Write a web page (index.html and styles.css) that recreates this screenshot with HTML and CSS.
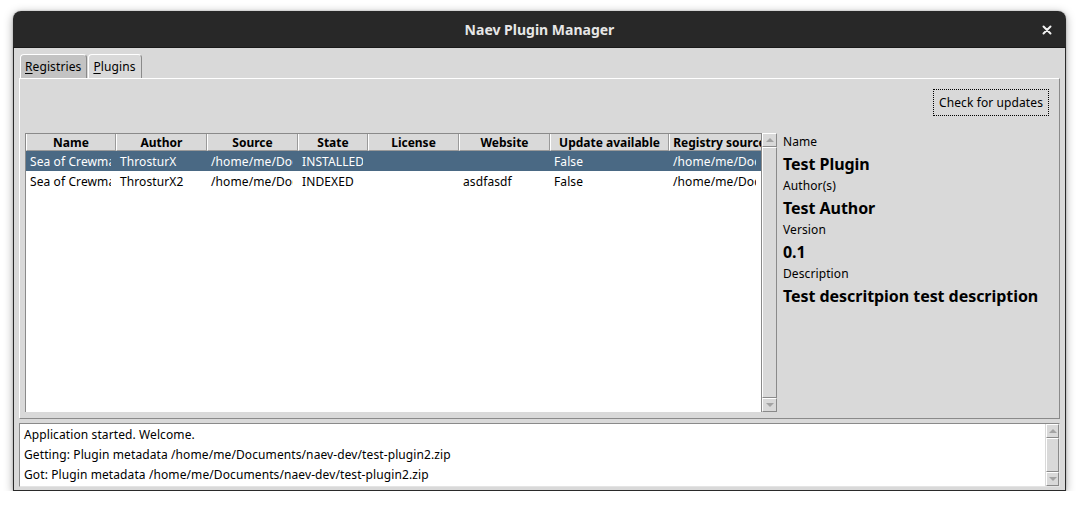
FILE: index.html
```html
<!DOCTYPE html>
<html>
<head>
<meta charset="utf-8">
<title>Naev Plugin Manager</title>
<link rel="stylesheet" href="styles.css">
</head>
<body>
<div class="desk">
  <div class="window">
    <div class="titlebar">
      <span></span>
      <span class="title">Naev Plugin Manager</span>
      <span class="close"><svg width="10" height="10" viewBox="0 0 10 10"><path d="M1.5 1.5 L8.5 8.5 M8.5 1.5 L1.5 8.5" stroke="#f2f2f2" stroke-width="2" stroke-linecap="round"/></svg></span>
    </div>
    <div class="client">
      <div class="tabs">
        <div class="tab"><u>R</u>egistries</div>
        <div class="tab active"><u>P</u>lugins</div>
      </div>
      <div class="frame">
        <div class="toolbar"><div class="btn"><span>Check for updates</span></div></div>
        <div class="main">
          <div class="treewrap">
            <div class="tree">
              <div class="row head">
                <div class="hc">Name</div>
                <div class="hc">Author</div>
                <div class="hc">Source</div>
                <div class="hc">State</div>
                <div class="hc">License</div>
                <div class="hc">Website</div>
                <div class="hc">Update available</div>
                <div class="hc">Registry source</div>
              </div>
              <div class="row sel">
                <div class="c">Sea of Crewmates</div>
                <div class="c">ThrosturX</div>
                <div class="c">/home/me/Documents/naev-dev</div>
                <div class="c">INSTALLED</div>
                <div class="c"></div>
                <div class="c"></div>
                <div class="c">False</div>
                <div class="c">/home/me/Documents</div>
              </div>
              <div class="row">
                <div class="c">Sea of Crewmates</div>
                <div class="c">ThrosturX2</div>
                <div class="c">/home/me/Documents/naev-dev</div>
                <div class="c">INDEXED</div>
                <div class="c"></div>
                <div class="c">asdfasdf</div>
                <div class="c">False</div>
                <div class="c">/home/me/Documents</div>
              </div>
            </div>
            <div class="vscroll">
              <div class="arrow"><span class="tri up"></span></div>
              <div class="thumb"></div>
              <div class="arrow"><span class="tri down"></span></div>
            </div>
          </div>
          <div class="details">
            <div class="lbl">Name</div>
            <div class="val">Test Plugin</div>
            <div class="lbl">Author(s)</div>
            <div class="val">Test Author</div>
            <div class="lbl">Version</div>
            <div class="val">0.1</div>
            <div class="lbl">Description</div>
            <div class="val">Test descritpion test description</div>
          </div>
        </div>
      </div>
      <div class="log">
        <div class="logtext">
          <div class="line">Application started. Welcome.</div>
          <div class="line">Getting: Plugin metadata /home/me/Documents/naev-dev/test-plugin2.zip</div>
          <div class="line">Got: Plugin metadata /home/me/Documents/naev-dev/test-plugin2.zip</div>
        </div>
        <div class="vscroll small">
          <div class="arrow"><span class="tri up"></span></div>
          <div class="thumb"></div>
          <div class="arrow"><span class="tri down"></span></div>
        </div>
      </div>
    </div>
  </div>
</div>
</body>
</html>
```

FILE: styles.css
```css
html, body {
  margin: 0;
  padding: 0;
  background: #ffffff;
}
body {
  font-family: "Noto Sans", "DejaVu Sans", sans-serif;
  font-size: 12px;
  letter-spacing: 0.1px;
  color: #000;
}
.desk {
  padding: 11px 0 0 13px;
}
.window {
  width: 1053px;
  height: 480px;
  display: flex;
  flex-direction: column;
  border-radius: 8px 8px 0 0;
  box-shadow: 0 2px 10px rgba(0,0,0,0.35), 0 0 2px rgba(0,0,0,0.25);
}
.titlebar {
  height: 37px;
  flex: none;
  background: #282828;
  border-radius: 8px 8px 0 0;
  display: grid;
  grid-template-columns: 1fr auto 1fr;
  align-items: center;
  box-sizing: border-box;
  border-bottom: 1px solid #1a1a1a;
}
.title {
  color: #e6e6e6;
  font-weight: 700;
  font-size: 14px;
  letter-spacing: 0;
  padding-top: 1px;
}
.close {
  justify-self: end;
  padding-right: 14px;
  display: flex;
  align-items: center;
  padding-top: 1px;
}
.client {
  flex: 1;
  background: #d9d9d9;
  border: 1px solid #2a2a2a;
  border-top: none;
  padding: 6px 5px 3px 5px;
  display: flex;
  flex-direction: column;
}
.tabs {
  display: flex;
  gap: 1px;
  height: 24px;
  padding-left: 1px;
}
.tab {
  box-sizing: border-box;
  height: 24px;
  line-height: 22px;
  padding: 1px 5px 0 4px;
  background: #c3c3c3;
  border: 1px solid #ffffff;
  border-right-color: #8a8a8a;
  border-bottom: none;
  border-radius: 4px 4px 0 0;
}
.tab.active {
  background: #d9d9d9;
}
.tab u {
  text-decoration-thickness: 1px;
  text-underline-offset: 2px;
}
.frame {
  height: 341px;
  box-sizing: border-box;
  border: 1px solid #ffffff;
  border-right-color: #8a8a8a;
  border-bottom-color: #8a8a8a;
  padding: 10px 10px 6px 5px;
  display: flex;
  flex-direction: column;
}
.toolbar {
  display: flex;
  justify-content: flex-end;
  height: 27px;
}
.btn {
  box-sizing: border-box;
  width: 116px;
  height: 27px;
  border: 1px dotted #000;
  display: flex;
  align-items: center;
  justify-content: center;
  line-height: 16px;
}
.main {
  margin-top: 17px;
  height: 279px;
  display: flex;
}
.treewrap {
  width: 752px;
  display: flex;
  flex: none;
}
.tree {
  width: 736px;
  background: #ffffff;
  border-left: 1px solid #8a8a8a;
  border-top: 1px solid #8a8a8a;
  overflow: hidden;
}
.row {
  display: grid;
  grid-template-columns: 90px 91px 91px 70px 91px 91px 119px 101px;
  height: 20px;
  line-height: 20px;
  white-space: nowrap;
}
.row.head {
  height: 17px;
  line-height: 15px;
  background: #d9d9d9;
}
.hc {
  box-sizing: border-box;
  font-weight: 700;
  letter-spacing: 0;
  text-align: center;
  padding-top: 1px;
  border-left: 1px solid #ffffff;
  border-right: 1px solid #9a9a9a;
  border-bottom: 1px solid #9a9a9a;
  overflow: hidden;
}
.c {
  overflow: hidden;
  padding-left: 4px;
  padding-top: 1px;
  margin-right: 5px;
}
.c:last-child {
  max-width: 83px;
}
.row.sel {
  background: #4a6984;
  color: #ffffff;
}
.vscroll {
  width: 16px;
  display: flex;
  flex-direction: column;
  background: #d9d9d9;
  border-left: 1px solid #8a8a8a;
  box-sizing: border-box;
}
.arrow {
  height: 14px;
  box-sizing: border-box;
  border: 1px solid;
  border-color: #ffffff #8a8a8a #8a8a8a #ffffff;
  display: flex;
  align-items: center;
  justify-content: center;
}
.thumb {
  flex: 1;
  box-sizing: border-box;
  border: 1px solid;
  border-color: #ffffff #8a8a8a #8a8a8a #ffffff;
}
.tri {
  width: 0;
  height: 0;
  border-left: 4px solid transparent;
  border-right: 4px solid transparent;
}
.tri.up {
  border-bottom: 4px solid #a3a3a3;
}
.tri.down {
  border-top: 4px solid #a3a3a3;
}
.details {
  flex: 1;
  padding-left: 6px;
}
.lbl {
  height: 17px;
  line-height: 17px;
}
.val {
  height: 27px;
  line-height: 29px;
  font-weight: 700;
  font-size: 16px;
  letter-spacing: -0.05px;
}
.log {
  margin-top: 4px;
  height: 64px;
  box-sizing: border-box;
  background: #ffffff;
  border: 1px solid;
  border-color: #8a8a8a #e4e4e4 #e4e4e4 #8a8a8a;
  display: flex;
}
.logtext {
  flex: 1;
  padding-left: 4px;
}
.line {
  height: 20px;
  line-height: 21px;
  white-space: nowrap;
}
.vscroll.small {
  width: 14px;
  border-left: 1px solid #d9d9d9;
}
```
